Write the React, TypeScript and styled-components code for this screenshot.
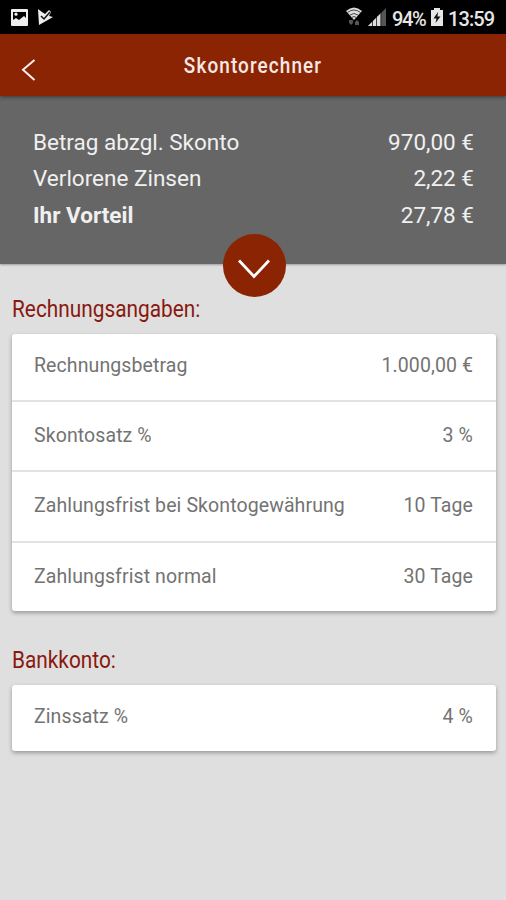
import React from "react";
import styled, { createGlobalStyle } from "styled-components";

const GlobalStyle = createGlobalStyle`
  * { box-sizing: border-box; }
  body {
    margin: 0;
    background: #dfdfdf;
    font-family: Roboto, "Liberation Sans", sans-serif;
  }
`;

const Screen = styled.main`
  width: 506px;
  height: 900px;
  display: flex;
  flex-direction: column;
  background: #dfdfdf;
  overflow: hidden;
`;

const StatusBar = styled.div`
  height: 34px;
  flex: none;
  display: flex;
  align-items: center;
  background: #000;
  color: #e6e6e6;
  padding: 0 11px;
`;

const StatusIcon = styled.svg<{ $gap: number }>`
  display: block;
  flex: none;
  margin-right: ${(p) => p.$gap}px;
`;

const StatusText = styled.span<{ $width: number; $gap: number; $tracking: number }>`
  width: ${(p) => p.$width}px;
  margin-right: ${(p) => p.$gap}px;
  font-size: 20px;
  font-weight: 500;
  line-height: 34px;
  letter-spacing: ${(p) => p.$tracking}px;
  white-space: nowrap;
  padding-top: 3px;
`;

const Spacer = styled.div`
  flex: 1;
`;

const AppBar = styled.header`
  height: 62px;
  flex: none;
  display: grid;
  grid-template-columns: 60px 1fr 60px;
  background: #8b2403;
  box-shadow: 0 1px 4px rgba(0, 0, 0, 0.45);
  z-index: 1;
`;

const BackButton = styled.button`
  border: 0;
  background: none;
  padding: 25px 0 0 21px;
  display: flex;
  align-items: flex-start;
`;

const Title = styled.h1`
  margin: 0;
  font-size: 22px;
  line-height: 64px;
  font-weight: 500;
  text-align: center;
  color: #f6e9e5;
  letter-spacing: 1.3px;
  transform: scaleX(0.86);
  white-space: nowrap;
`;

const Summary = styled.section`
  position: relative;
  height: 168px;
  flex: none;
  background: #666;
  padding: 28px 32px 0 33px;
  box-shadow: 0 1px 2px rgba(0, 0, 0, 0.3);
`;

const SummaryRow = styled.div<{ $strong?: boolean }>`
  height: 36.4px;
  display: flex;
  justify-content: space-between;
  font-size: 22.5px;
  line-height: 36px;
  color: #f0f0f0;

  span:first-child {
    font-weight: ${(p) => (p.$strong ? 700 : 400)};
  }
`;

const Toggle = styled.button`
  position: absolute;
  left: 223px;
  bottom: -33px;
  width: 63px;
  height: 63px;
  border: 0;
  border-radius: 50%;
  background: #8b2403;
  display: flex;
  align-items: center;
  justify-content: center;
  padding: 6px 2px 0 0;
`;

const Content = styled.div`
  padding: 25px 10px 0 12px;
`;

const Heading = styled.h2`
  margin: 0;
  height: 45px;
  font-size: 24px;
  line-height: 41px;
  font-weight: 400;
  color: #89190f;
  transform: scaleX(0.868);
  transform-origin: 0 0;
  white-space: nowrap;
`;

const Card = styled.section`
  background: #fff;
  border-radius: 3px;
  box-shadow: 0 2px 4px rgba(0, 0, 0, 0.32);
  margin-bottom: 29px;
`;

const Row = styled.div`
  height: 66px;
  display: flex;
  justify-content: space-between;
  padding: 0 23px 0 22px;
  font-size: 19.5px;
  line-height: 63px;
  letter-spacing: 0.1px;
  color: #737373;

  & + & {
    height: 70.3px;
    line-height: 68px;
    border-top: 2px solid #e2e2e2;
  }
`;

const summary = [
  { label: "Betrag abzgl. Skonto", value: "970,00 €" },
  { label: "Verlorene Zinsen", value: "2,22 €" },
  { label: "Ihr Vorteil", value: "27,78 €", strong: true },
];

const groups = [
  {
    title: "Rechnungsangaben:",
    rows: [
      ["Rechnungsbetrag", "1.000,00 €"],
      ["Skontosatz %", "3 %"],
      ["Zahlungsfrist bei Skontogewährung", "10 Tage"],
      ["Zahlungsfrist normal", "30 Tage"],
    ],
  },
  { title: "Bankkonto:", rows: [["Zinssatz %", "4 %"]] },
];

export default function App() {
  return (
    <>
      <GlobalStyle />
      <Screen>
        <StatusBar>
          <StatusIcon $gap={10} width="17" height="17" viewBox="0 0 17 17">
            <path fillRule="evenodd" fill="#eee" d="M1 0h15q1 0 1 1v15q0 1-1 1H1q-1 0-1-1V1q0-1 1-1zM2 3v8l3-2 3 2 5-4 2 2V3z" />
            <circle cx="5" cy="5.2" r="1.6" fill="#eee" />
          </StatusIcon>
          <StatusIcon $gap={0} width="15" height="17" viewBox="0 0 15 17">
            <path fill="#eee" d="M0 0l4 3 3 2 4-4 2 2-2 4 4 1-14 8z" />
            <path fill="none" stroke="#111" strokeWidth="1.5" d="M3 7l3 3 6-7" />
          </StatusIcon>
          <Spacer />
          <StatusIcon $gap={6} width="16" height="20" viewBox="0 0 16 20">
            <path fill="#ddd" d="M0 4Q8-3 16 4L8 13z" />
            <path fill="none" stroke="#222" strokeWidth="0.8" d="M1.500 5.500q6.500-5 13 0M4 8q4-3 8 0M6 10.300q2-1.500 4 0" />
            <path fill="#555" d="M3 13h4v3l-2 2-2-2zM9 18h4v-3l-2-2-2 2z" />
          </StatusIcon>
          <StatusIcon $gap={6} width="18" height="18" viewBox="0 0 18 18">
            <path fill="#555" d="M18 0v18H0z" />
            <path fill="#ddd" d="M13 5v13H0z" />
            <path stroke="#000" strokeWidth="0.700" d="M4.500 10v8M8.500 6v12M12.800 3v15" />
          </StatusIcon>
          <StatusText $width={34} $gap={5} $tracking={-1.4}>94%</StatusText>
          <StatusIcon $gap={5} width="12" height="18" viewBox="0 0 12 18">
            <path fill="#e6e6e6" d="M3 0h6v2h3v16H0V2h3z" />
            <path fill="#111" d="M7 4L2.500 10.500H5.500L4.500 15 9.500 8.500H6.500z" />
          </StatusIcon>
          <StatusText $width={47} $gap={0} $tracking={-0.9}>13:59</StatusText>
        </StatusBar>
        <AppBar>
          <BackButton aria-label="Zurück">
            <svg width="15" height="22" viewBox="0 0 15 22">
              <path d="M13.500 1L2 10.800 13.500 21" fill="none" stroke="#f8eeee" strokeWidth="2" />
            </svg>
          </BackButton>
          <Title>Skontorechner</Title>
        </AppBar>
        <Summary>
          {summary.map((s) => (
            <SummaryRow key={s.label} $strong={s.strong}>
              <span>{s.label}</span>
              <span>{s.value}</span>
            </SummaryRow>
          ))}
          <Toggle aria-label="Details">
            <svg width="34" height="22" viewBox="0 0 34 22">
              <path d="M2 2.500L17 18.500 32 2.500" fill="none" stroke="#fff" strokeWidth="2.800" />
            </svg>
          </Toggle>
        </Summary>
        <Content>
          {groups.map((g) => (
            <React.Fragment key={g.title}>
              <Heading>{g.title}</Heading>
              <Card>
                {g.rows.map(([label, value]) => (
                  <Row key={label}>
                    <span>{label}</span>
                    <span>{value}</span>
                  </Row>
                ))}
              </Card>
            </React.Fragment>
          ))}
        </Content>
      </Screen>
    </>
  );
}
